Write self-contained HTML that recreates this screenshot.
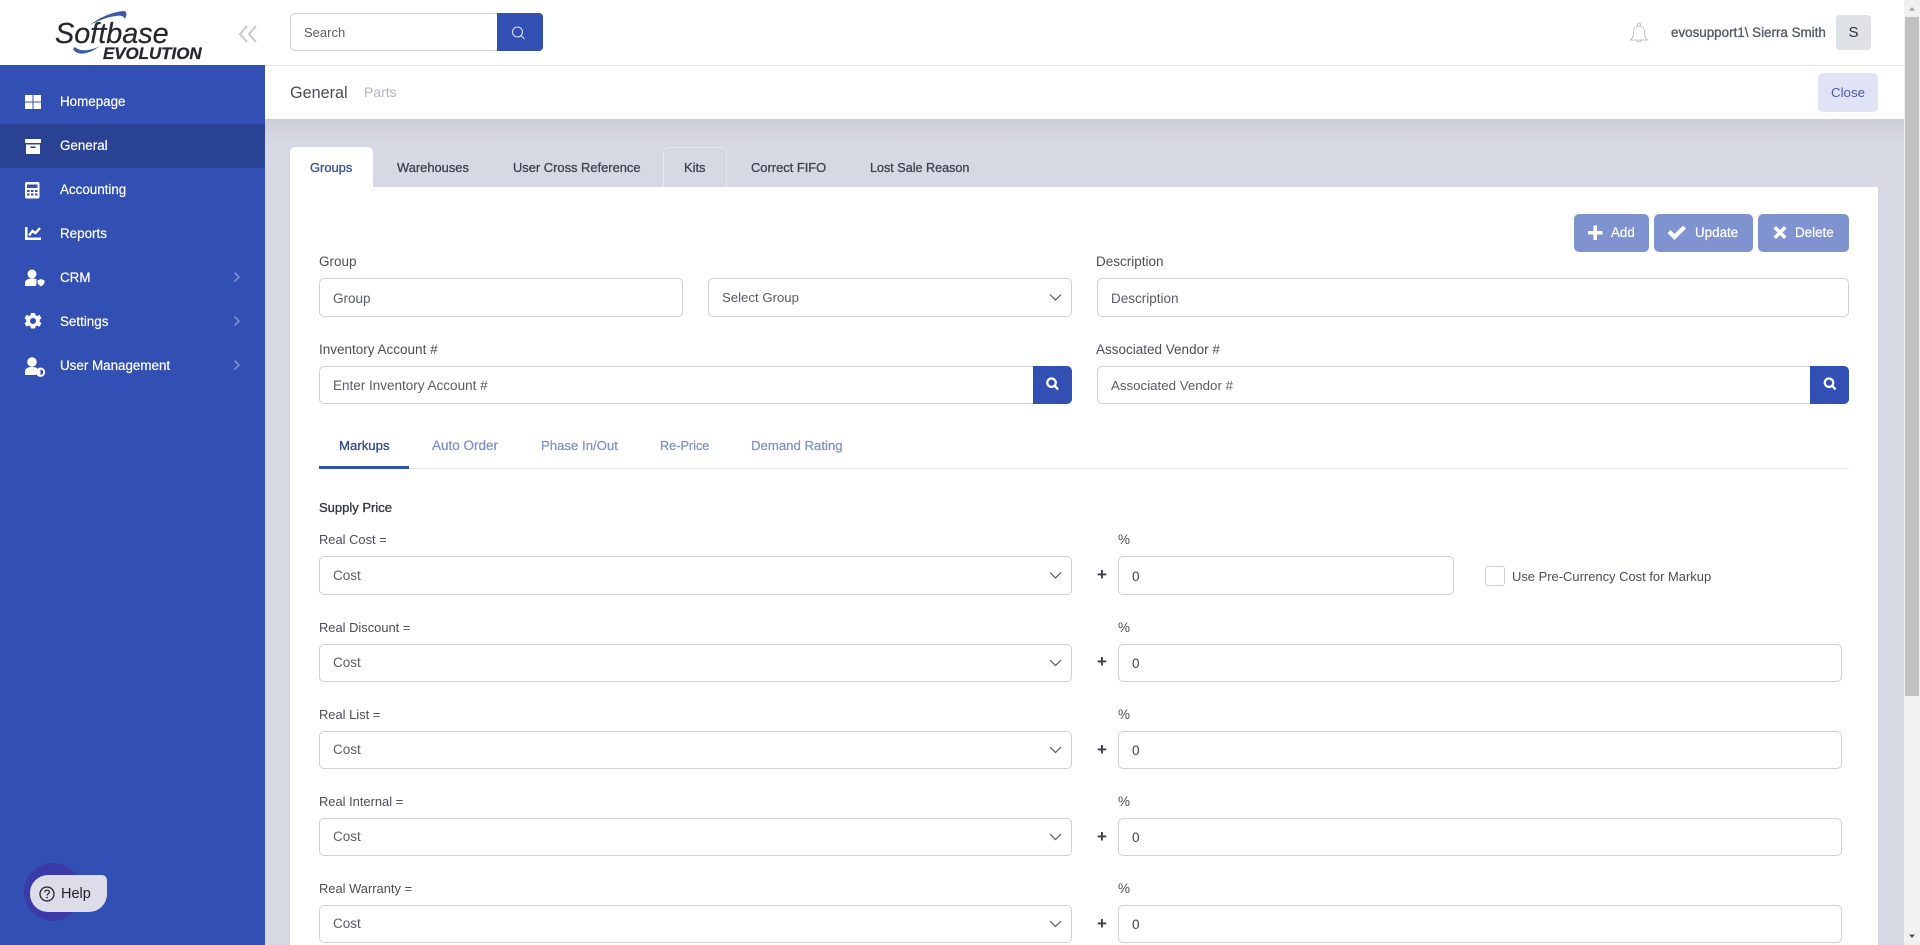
<!DOCTYPE html>
<html lang="en">
<head>
<meta charset="utf-8">
<title>General - Parts</title>
<style>
html,body{margin:0;padding:0;width:1920px;height:945px;overflow:hidden;background:#d6d8e4;font-family:"Liberation Sans",sans-serif;font-size:13.5px;color:#474a55}
.a,.t,.box,.btn,.ic{position:absolute}
.t{line-height:20px;height:20px;white-space:nowrap}
.box{box-sizing:border-box;background:#fff;border:1px solid #cfd0d3;border-radius:5px}
.side{left:0;top:65px;width:265px;height:880px;background:#324fb4}
.nav{color:#fff;left:60px;font-size:13.4px;margin-top:1px;-webkit-text-stroke:.2px #fff}
.tab{font-size:12.9px;margin-top:1px;color:#3f4250;-webkit-text-stroke:.3px #3f4250}
.sub{font-size:13.2px;color:#7f91c8;-webkit-text-stroke:.25px #7f91c8}
.ph{color:#5a5c66;margin-top:1px}
.lab{color:#4c4e58;margin-top:1px}
.s13{font-size:12.9px}
.plus{left:1096px;font-size:17px;font-weight:bold;color:#3c3e4a;margin-top:1px}
.zero{left:1132px;color:#3c3e4a;margin-top:1px}
.btn{box-sizing:border-box;top:214px;height:38px;background:#8093d1;border-radius:5px}
.bt{color:#fff;font-size:13.4px;top:223px;-webkit-text-stroke:.2px #fff}
.blue{background:#324fb4}
svg{position:absolute;overflow:visible}
</style>
</head>
<body>

<!-- main panels -->
<div class="a" style="left:265px;top:119px;width:1639px;height:22px;background:linear-gradient(#cdceda,#d6d8e4)"></div>
<div class="a" style="left:265px;top:0;width:1639px;height:65px;background:#fff"></div>
<div class="a" style="left:265px;top:65px;width:1639px;height:1px;background:#e9eaee"></div>
<div class="a" style="left:265px;top:66px;width:1639px;height:53px;background:#fff"></div>

<!-- scrollbar -->
<div class="a" style="left:1904px;top:0;width:16px;height:945px;background:#f1f1f1"></div>
<div class="a" style="left:1905px;top:17px;width:14px;height:679px;background:#c1c1c1"></div>
<svg style="left:1904px;top:0" width="16" height="945"><path d="M5 10.500L8 7l3 3.500z" fill="#a3a3a3"/><path d="M5 934.500L8 938l3-3.500z" fill="#505050"/></svg>

<!-- sidebar -->
<div class="a" style="left:0;top:0;width:265px;height:65px;background:#fff"></div>
<svg style="left:0;top:0" width="265" height="65">
<path d="M90 25C100 17 112 12 124 11C127 11 127 15 125 19C124 16 120 15 116 16C107 17 98 21 90 25z" fill="#3d5aa8"/>
<path d="M73 49C77 56 88 55 100 46C90 51 80 52 75 47z" fill="#3d5aa8"/>
<path d="M247 26l-7 8 7 8M256 26l-7 8 7 8" fill="none" stroke="#c6c9d0" stroke-width="2"/>
</svg>
<div class="t" style="left:55px;top:18px;height:32px;line-height:32px;font-size:28.800px;font-style:italic;color:#26282d;-webkit-text-stroke:.2px #26282d">Softbase</div>
<div class="t" style="left:103px;top:44px;line-height:20px;font-size:16.900px;font-weight:bold;font-style:italic;color:#26282d;-webkit-text-stroke:.3px #26282d">EVOLUTION</div>

<div class="a side"></div>
<div class="a" style="left:0;top:124px;width:265px;height:44px;background:#2a4294"></div>

<svg style="left:0;top:0" width="265" height="400" fill="#fff">
<!-- windows -->
<path d="M25 95h7.500v6.500H25zM33.500 95H41v6.500h-7.500zM25 102.500h7.500V109H25zM33.500 102.500H41V109h-7.500z"/>
<!-- archive -->
<path d="M25 139h16v4H25z"/><path fill-rule="evenodd" d="M26 144.500h14V154H26zM30.500 146.500v1.500h5v-1.500z"/>
<!-- calculator -->
<path fill-rule="evenodd" d="M26.500 182h11.500a1.500 1.500 0 0 1 1.500 1.500v13.500a1.500 1.500 0 0 1-1.500 1.500H26.500A1.500 1.500 0 0 1 25 197V183.500A1.500 1.500 0 0 1 26.500 182zM27 184.500v3.500h10.500v-3.500zM27 190v2h2.500v-2zM31 190v2h2.500v-2zM35 190v2h2.500v-2zM27 193.500v2h2.500v-2zM31 193.500v2h2.500v-2zM35 193.500v2h2.500v-2z"/>
<!-- chart -->
<path d="M25 227h2.500v10.500H41V240H25z"/><path d="M29 235.500l3.500-4.500 3 2 4.500-5" fill="none" stroke="#fff" stroke-width="2.400"/>
<!-- CRM user -->
<circle cx="32" cy="274" r="4.500"/><path d="M25 286v-3c0-3 3-4.500 7-4.500 2 0 3.500.3 5 1l-1 6.500z"/><path d="M37 280l4-1.500 4 1.500v2c0 2.500-2 4-4 5-2-1-4-2.500-4-5z" stroke="#324fb4" stroke-width="1"/>
<!-- gear -->
<path fill-rule="evenodd" d="M31 313h4l.6 2.300 1.700.7 2.100-1.200 2 3.400-1.700 1.600v1.900l1.700 1.600-2 3.400-2.100-1.200-1.700.7-.6 2.300h-4l-.6-2.300-1.700-.7-2.100 1.200-2-3.400 1.700-1.600v-1.900l-1.700-1.600 2-3.400 2.100 1.200 1.700-.7zM33 318a3 3 0 1 0 0 6 3 3 0 0 0 0-6z"/>
<!-- UM user -->
<circle cx="32" cy="362" r="4.800"/><path d="M25 375v-3.500c0-3 3-4.500 7-4.500 2 0 3.500.3 5 1l-1 7z"/><path fill-rule="evenodd" d="M40.500 367.500a4.700 4.700 0 1 1 0 9.400 4.700 4.700 0 0 1 0-9.400zM40.500 369.500v5.400a2.700 2.700 0 0 0 0-5.400z"/>
<!-- chevrons -->
<path d="M234.500 272.500l4.500 4.500-4.500 4.500M234.500 316.500l4.500 4.500-4.500 4.500M234.500 360.500l4.500 4.500-4.500 4.500" fill="none" stroke="#8c9cd6" stroke-width="1.300"/>
</svg>

<div class="t nav" style="top:91px">Homepage</div>
<div class="t nav" style="top:135px">General</div>
<div class="t nav" style="top:179px">Accounting</div>
<div class="t nav" style="top:223px">Reports</div>
<div class="t nav" style="top:267px">CRM</div>
<div class="t nav" style="top:311px">Settings</div>
<div class="t nav" style="top:355px">User Management</div>

<!-- help -->
<div class="a" style="left:24px;top:863px;width:58px;height:58px;border-radius:50%;background:#3c3aa8"></div>
<div class="a" style="left:30px;top:875px;width:77px;height:37px;background:#dcdde9;border-radius:18px 5px 18px 18px"></div>
<svg style="left:39px;top:886px" width="16" height="16"><circle cx="8" cy="8" r="7" fill="none" stroke="#1f2028" stroke-width="1.300"/><path d="M5.800 6.300C5.900 4.900 7 4.200 8.100 4.200c1.300 0 2.300.8 2.300 1.900 0 1.600-2.300 1.700-2.300 3.400" fill="none" stroke="#1f2028" stroke-width="1.200"/><circle cx="8.100" cy="11.600" r=".8" fill="#1f2028"/></svg>
<div class="t" style="left:61px;top:884px;font-size:14.500px;color:#1f2028">Help</div>

<!-- top bar -->
<div class="box" style="left:290px;top:13px;width:210px;height:38px;border-radius:5px 0 0 5px"></div>
<div class="t ph" style="left:304px;top:22px;font-size:13px">Search</div>
<div class="a blue" style="left:497px;top:13px;width:46px;height:38px;border-radius:0 4px 4px 0"></div>
<svg style="left:510px;top:25px" width="20" height="20" fill="none" stroke="#dfe3f5" stroke-width="1"><circle cx="7.500" cy="7" r="5"/><path d="M11 10.500l3.500 3.500"/></svg>

<svg style="left:1629px;top:22px" width="22" height="22" fill="none" stroke="#b0b2b8" stroke-width=".8"><path d="M1.500 18c2-1.500 3-3.500 3-7.500 0-4 2-6.500 5.500-6.500s5.500 2.500 5.500 6.500c0 4 1 6 3 7.500z"/><path d="M8.500 4V2.500a1.500 1.500 0 0 1 3 0V4M8 18c0 2.500 4 2.500 4 0"/></svg>
<div class="t" style="left:1671px;top:23px;font-size:13.400px;color:#585b68;-webkit-text-stroke:.35px #585b68">evosupport1\ Sierra Smith</div>
<div class="a" style="left:1836px;top:15px;width:35px;height:35px;background:#dee1e6;border-radius:4px;text-align:center;line-height:35px;font-size:15px;color:#2d3040">S</div>

<!-- page header -->
<div class="t" style="left:290px;top:83px;font-size:16.200px;color:#4a4c55">General</div>
<div class="t" style="left:364px;top:82px;font-size:14px;color:#b3b5bc">Parts</div>
<div class="a" style="left:1818px;top:73px;width:60px;height:39px;background:#dfe3f5;border-radius:5px;text-align:center;line-height:39px;font-size:13.300px;color:#4a5aa5">Close</div>

<!-- tabs & card -->
<div class="a" style="left:290px;top:187px;width:1588px;height:758px;background:#fff"></div>
<div class="a" style="left:290px;top:147px;width:83px;height:40px;background:#fff;border-radius:5px 5px 0 0"></div>
<div class="a" style="left:663px;top:147px;width:64px;height:40px;box-sizing:border-box;border:1px solid #e6e7ef;border-bottom:0;border-radius:5px 5px 0 0"></div>
<div class="t tab" style="left:310px;top:157px;color:#39509f;-webkit-text-stroke:.3px #39509f">Groups</div>
<div class="t tab" style="left:397px;top:157px">Warehouses</div>
<div class="t tab" style="left:513px;top:157px">User Cross Reference</div>
<div class="t tab" style="left:684px;top:157px">Kits</div>
<div class="t tab" style="left:751px;top:157px">Correct FIFO</div>
<div class="t tab" style="left:870px;top:157px;font-size:12.600px">Lost Sale Reason</div>

<!-- action buttons -->
<div class="btn" style="left:1574px;width:75px"></div>
<div class="btn" style="left:1654px;width:99px"></div>
<div class="btn" style="left:1758px;width:91px"></div>
<svg style="left:0;top:0" width="1920" height="300" fill="#fff">
<path d="M1588 231h5.500v-5.500h3.500v5.500h5.500v3.500H1597v5.500h-3.500v-5.500H1588z"/>
<path d="M1667.500 233l3-3 4 4 8.500-8.500 3 3-11.500 11.500z"/>
<path d="M1773.500 228.500l2.500-2.500 4 4 4-4 2.500 2.500-4 4 4 4-2.500 2.500-4-4-4 4-2.500-2.500 4-4z"/>
</svg>
<div class="t bt" style="left:1611px">Add</div>
<div class="t bt" style="left:1695px">Update</div>
<div class="t bt" style="left:1795px">Delete</div>

<!-- form -->
<div class="t lab" style="left:319px;top:251px">Group</div>
<div class="box" style="left:319px;top:278px;width:364px;height:39px"></div>
<div class="t ph" style="left:333px;top:288px">Group</div>
<div class="box" style="left:708px;top:278px;width:364px;height:39px"></div>
<div class="t ph" style="left:722px;top:287px;font-size:13.200px">Select Group</div>
<div class="t lab" style="left:1096px;top:251px">Description</div>
<div class="box" style="left:1097px;top:278px;width:752px;height:39px"></div>
<div class="t ph" style="left:1111px;top:288px">Description</div>

<div class="t lab" style="left:319px;top:339px">Inventory Account #</div>
<div class="box" style="left:319px;top:366px;width:753px;height:38px"></div>
<div class="t ph" style="left:333px;top:375px">Enter Inventory Account #</div>
<div class="a blue" style="left:1033px;top:366px;width:39px;height:38px;border-radius:0 5px 5px 0"></div>
<div class="t lab" style="left:1096px;top:339px">Associated Vendor #</div>
<div class="box" style="left:1097px;top:366px;width:752px;height:38px"></div>
<div class="t ph" style="left:1111px;top:375px;font-size:13.300px">Associated Vendor #</div>
<div class="a blue" style="left:1810px;top:366px;width:39px;height:38px;border-radius:0 5px 5px 0"></div>

<!-- sub tabs -->
<div class="a" style="left:319px;top:468px;width:1530px;height:1px;background:#e6e7ea"></div>
<div class="a" style="left:319px;top:466px;width:90px;height:3px;background:#324fb4"></div>
<div class="t sub" style="left:339px;top:436px;color:#34488f;-webkit-text-stroke:.3px #34488f">Markups</div>
<div class="t sub" style="left:432px;top:436px;font-size:13.500px">Auto Order</div>
<div class="t sub" style="left:541px;top:436px">Phase In/Out</div>
<div class="t sub" style="left:660px;top:436px;font-size:12.700px">Re-Price</div>
<div class="t sub" style="left:751px;top:436px">Demand Rating</div>

<div class="t" style="left:319px;top:498px;font-size:13px;color:#33353e;-webkit-text-stroke:.3px #33353e">Supply Price</div>

<!-- row 1 -->
<div class="t lab s13" style="left:319px;top:529px">Real Cost =</div>
<div class="t lab" style="left:1118px;top:529px">%</div>
<div class="box" style="left:319px;top:556px;width:753px;height:39px"></div>
<div class="t ph" style="left:333px;top:565px">Cost</div>
<div class="t plus" style="left:1097px;top:564px">+</div>
<div class="box" style="left:1118px;top:556px;width:336px;height:39px"></div>
<div class="t zero" style="top:566px">0</div>
<div class="box" style="left:1485px;top:566px;width:20px;height:20px;border-radius:3px"></div>
<div class="t lab" style="left:1512px;top:566px;font-size:12.950px">Use Pre-Currency Cost for Markup</div>

<!-- row 2 -->
<div class="t lab s13" style="left:319px;top:617px">Real Discount =</div>
<div class="t lab" style="left:1118px;top:617px">%</div>
<div class="box" style="left:319px;top:644px;width:753px;height:38px"></div>
<div class="t ph" style="left:333px;top:652px">Cost</div>
<div class="t plus" style="left:1097px;top:651px">+</div>
<div class="box" style="left:1118px;top:644px;width:724px;height:38px"></div>
<div class="t zero" style="top:653px">0</div>

<!-- row 3 -->
<div class="t lab s13" style="left:319px;top:704px">Real List =</div>
<div class="t lab" style="left:1118px;top:704px">%</div>
<div class="box" style="left:319px;top:731px;width:753px;height:38px"></div>
<div class="t ph" style="left:333px;top:739px">Cost</div>
<div class="t plus" style="left:1097px;top:739px">+</div>
<div class="box" style="left:1118px;top:731px;width:724px;height:38px"></div>
<div class="t zero" style="top:740px">0</div>

<!-- row 4 -->
<div class="t lab s13" style="left:319px;top:791px">Real Internal =</div>
<div class="t lab" style="left:1118px;top:791px">%</div>
<div class="box" style="left:319px;top:818px;width:753px;height:38px"></div>
<div class="t ph" style="left:333px;top:826px">Cost</div>
<div class="t plus" style="left:1097px;top:826px">+</div>
<div class="box" style="left:1118px;top:818px;width:724px;height:38px"></div>
<div class="t zero" style="top:827px">0</div>

<!-- row 5 -->
<div class="t lab s13" style="left:319px;top:878px">Real Warranty =</div>
<div class="t lab" style="left:1118px;top:878px">%</div>
<div class="box" style="left:319px;top:905px;width:753px;height:38px"></div>
<div class="t ph" style="left:333px;top:913px">Cost</div>
<div class="t plus" style="left:1097px;top:913px">+</div>
<div class="box" style="left:1118px;top:905px;width:724px;height:38px"></div>
<div class="t zero" style="top:914px">0</div>

<!-- overlay icons: search magnifiers & select chevrons -->
<svg style="left:0;top:0" width="1920" height="945">
<path d="M1051.500 378.500a4.200 4.200 0 1 0 .01 0M1055 386l3 3.500M1829 378.500a4.200 4.200 0 1 0 .01 0M1832.500 386l3 3.500" fill="none" stroke="#fff" stroke-width="2.300"/>
<g fill="none" stroke="#55575f" stroke-width="1.200">
<path d="M1050 294.500l5.500 5.500 5.500-5.500M1050 572.500l5.500 5.500 5.500-5.500M1050 660l5.500 5.500 5.500-5.500M1050 747l5.500 5.500 5.500-5.500M1050 834l5.500 5.500 5.500-5.500M1050 921l5.500 5.500 5.500-5.500"/>
</g>
</svg>

</body>
</html>
